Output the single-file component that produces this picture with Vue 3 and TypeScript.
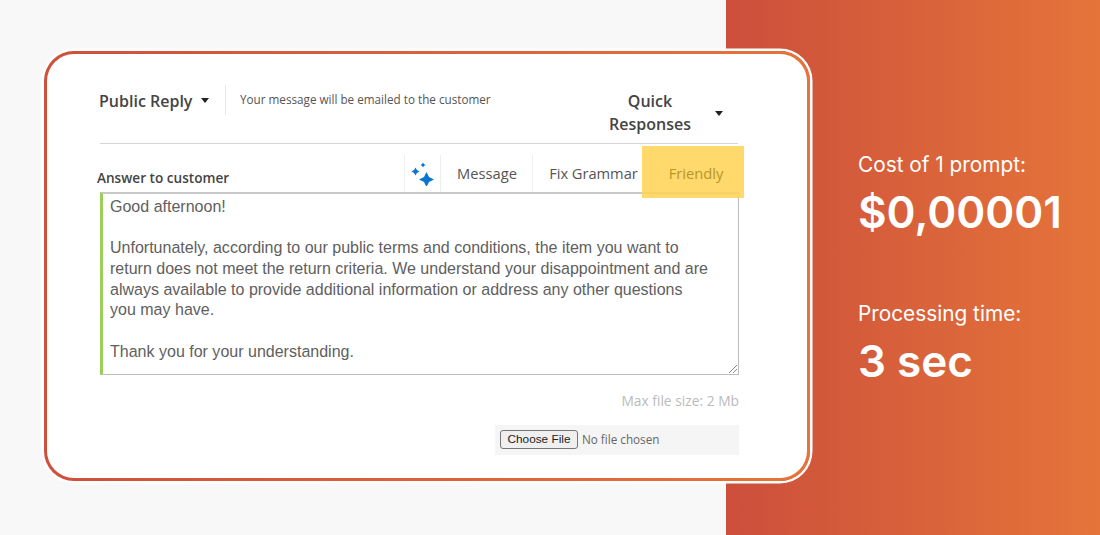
<script setup lang="ts">
// Reply editor mockup with the AI toolbar and the cost figures beside it
type Stat = {
  label: string;
  value: string;
};

const tools = ["Message", "Fix Grammar"];

const replyLines = [
  "Good afternoon!",
  "",
  "Unfortunately, according to our public terms and conditions, the item you want to",
  "return does not meet the return criteria. We understand your disappointment and are",
  "always available to provide additional information or address any other questions",
  "you may have.",
  "",
  "Thank you for your understanding.",
];

const stats: Stat[] = [
  { label: "Cost of 1 prompt:", value: "$0,00001" },
  { label: "Processing time:", value: "3 sec" },
];
</script>

<template>
  <main class="page">
    <section class="stage">
      <div class="card">
        <header class="reply-head">
          <div class="reply-type">
            <span>Public Reply</span>
            <i class="caret"></i>
          </div>
          <p class="reply-hint">Your message will be emailed to the customer</p>
          <div class="quick">
            <span>Quick<br />Responses</span>
            <i class="caret"></i>
          </div>
        </header>

        <div class="answer-row">
          <label class="answer-label">Answer to customer</label>
          <div class="tools">
            <button type="button" class="tool tool-icon" aria-label="AI tools">
              <svg width="24" height="24" viewBox="0 0 24 24">
                <path fill="#0a74d1" d="M15.500 10 18 15 23 17.500 18 20 15.500 25 13 20 8 17.500 13 15Z" />
                <path fill="#0a74d1" d="M4.500 5.500 5.900 8.100 8.500 9.500 5.900 10.900 4.500 13.500 3.100 10.900 .5 9.500 3.100 8.100Z" />
                <path fill="#0a74d1" d="M12 .5 12.900 2.100 14.500 3 12.900 3.900 12 5.500 11.100 3.900 9.500 3 11.100 2.100Z" />
              </svg>
            </button>
            <button v-for="tool in tools" :key="tool" type="button" class="tool">{{ tool }}</button>
            <button type="button" class="tool tool-active">Friendly</button>
          </div>
        </div>

        <div class="answer-box">
          <p v-for="(line, index) in replyLines" :key="index" class="answer-line">{{ line }}</p>
          <svg class="grip" width="10" height="10" viewBox="0 0 10 10">
            <path d="M1 9 9 1M5 9 9 5" stroke="#8a8a8a" stroke-width="1" fill="none" />
          </svg>
        </div>

        <p class="max-size">Max file size: 2 Mb</p>

        <div class="file-row">
          <button type="button" class="file-button">Choose File</button>
          <span class="file-name">No file chosen</span>
        </div>
      </div>
    </section>

    <aside class="side">
      <div v-for="stat in stats" :key="stat.label" class="stat">
        <p class="stat-label">{{ stat.label }}</p>
        <p class="stat-value">{{ stat.value }}</p>
      </div>
    </aside>
  </main>
</template>

<style>
html,
body {
  margin: 0;
  background: #f8f8f8;
}
</style>

<style scoped>
.page {
  width: 1100px;
  height: 535px;
  display: flex;
  overflow: hidden;
  background: #f8f8f8;
}

.stage {
  width: 726px;
  flex: none;
  box-sizing: border-box;
  padding: 51px 0 0 44px;
  position: relative;
  z-index: 1;
}

/* the card is wider than its column so it runs over the orange panel */
.card {
  width: 766px;
  height: 430px;
  box-sizing: border-box;
  padding: 31px 68px 0 53px;
  border: 3px solid transparent;
  border-radius: 30px;
  background:
    linear-gradient(#fff, #fff) padding-box,
    linear-gradient(90deg, #cf4f3b, #e5743b) border-box;
  box-shadow: 0 0 0 2.5px #fff;
  font-family: "Open Sans", "Noto Sans", sans-serif;
}

.reply-head {
  height: 58px;
  display: flex;
  align-items: flex-start;
  border-bottom: 1px solid #d4d4d4;
  margin-right: 1px;
}

.reply-type {
  width: 127px;
  height: 30px;
  flex: none;
  box-sizing: border-box;
  display: flex;
  align-items: center;
  gap: 9px;
  border-right: 1px solid #e8e8e8;
  color: #444;
  font-size: 16px;
  font-weight: 600;
  margin-left: -1px;
  padding-top: 1px;
}

.caret {
  width: 0;
  height: 0;
  border-left: 4.5px solid transparent;
  border-right: 4.5px solid transparent;
  border-top: 5px solid #222;
}

.reply-hint {
  margin: 6px 0 0 14px;
  width: 250px;
  flex: none;
  color: #555;
  font-size: 11.7px;
  line-height: 16px;
  white-space: nowrap;
}

.quick {
  margin: 5px 18px 0 auto;
  width: 120px;
  flex: none;
  display: flex;
  align-items: center;
  color: #444;
  font-size: 16px;
  font-weight: 600;
  line-height: 23px;
  text-align: center;
}

.quick span {
  width: 100px;
  flex: none;
}

.quick .caret {
  margin-left: 15px;
}

.answer-row {
  height: 49px;
  display: flex;
  align-items: flex-end;
  justify-content: space-between;
  margin: 0 0 0 -3px;
}

.answer-label {
  color: #444;
  font-size: 13.6px;
  font-weight: 600;
  line-height: 18px;
  padding-bottom: 6px;
}

.tools {
  display: flex;
  height: 37px;
  margin: 0 -5px 1px 0;
}

.tool {
  padding: 0 0 2px;
  border: 0;
  border-right: 1px solid #eee;
  background: #fff;
  color: #555;
  font-family: inherit;
  font-size: 14.7px;
  width: 92px;
}

.tool:nth-child(2) {
  padding-left: 1px;
}

.tool:nth-child(3) {
  width: 120px;
  padding-left: 2px;
  letter-spacing: -0.05px;
}

.tool-icon {
  width: 37px;
  padding: 0;
  display: flex;
  align-items: center;
  justify-content: center;
  border-left: 1px solid #eee;
}

.tool-active {
  position: relative;
  width: 91px;
  padding-right: 5px;
  border: 0;
  background: transparent;
  color: #b9962a;
  z-index: 2;
}

/* translucent marker, wider and taller than the button it highlights */
.tool-active::before {
  content: "";
  position: absolute;
  inset: -9px 0 -6px -11px;
  background: rgba(255, 210, 81, 0.85);
  z-index: -1;
}

.answer-box {
  height: 183px;
  box-sizing: border-box;
  position: relative;
  margin-top: -1px;
  border: 1px solid #bdbdbd;
  border-top: 2px solid #c8c8c8;
  border-left: 3px solid #9ccf5a;
  padding: 2px 7px;
  color: #606060;
  font-family: "Liberation Sans", Arial, sans-serif;
  font-size: 16.03px;
  line-height: 20.7px;
}

.answer-line {
  margin: 0;
  height: 20.7px;
  white-space: nowrap;
}

.grip {
  position: absolute;
  right: 0;
  bottom: 0;
}

.max-size {
  margin: 16px 0 0;
  text-align: right;
  color: #bbb;
  font-size: 13.8px;
  line-height: 20px;
}

.file-row {
  width: 244px;
  height: 30px;
  box-sizing: border-box;
  margin: 14px 0 0 auto;
  padding: 0 0 2px 5px;
  display: flex;
  align-items: center;
  gap: 4px;
  background: #f5f5f5;
}

.file-button {
  width: 78px;
  height: 19px;
  padding: 0;
  border: 1px solid #777;
  border-radius: 3px;
  background: #efefef;
  color: #222;
  font-family: "Liberation Sans", Arial, sans-serif;
  font-size: 11.8px;
}

.file-name {
  color: #666;
  font-size: 11.7px;
}

.side {
  flex: 1;
  box-sizing: border-box;
  padding: 151px 0 0 132px;
  background: linear-gradient(90deg, #cc4f3b, #e5743a);
  color: #fff;
  font-family: Inter, "Noto Sans", sans-serif;
}

.stat {
  height: 149px;
}

.stat-label {
  margin: 0;
  font-size: 20.8px;
  line-height: 28px;
  white-space: nowrap;
}

.stat-value {
  margin: 5px 0 0;
  font-size: 44px;
  font-weight: 600;
  line-height: 56px;
  white-space: nowrap;
}
</style>
